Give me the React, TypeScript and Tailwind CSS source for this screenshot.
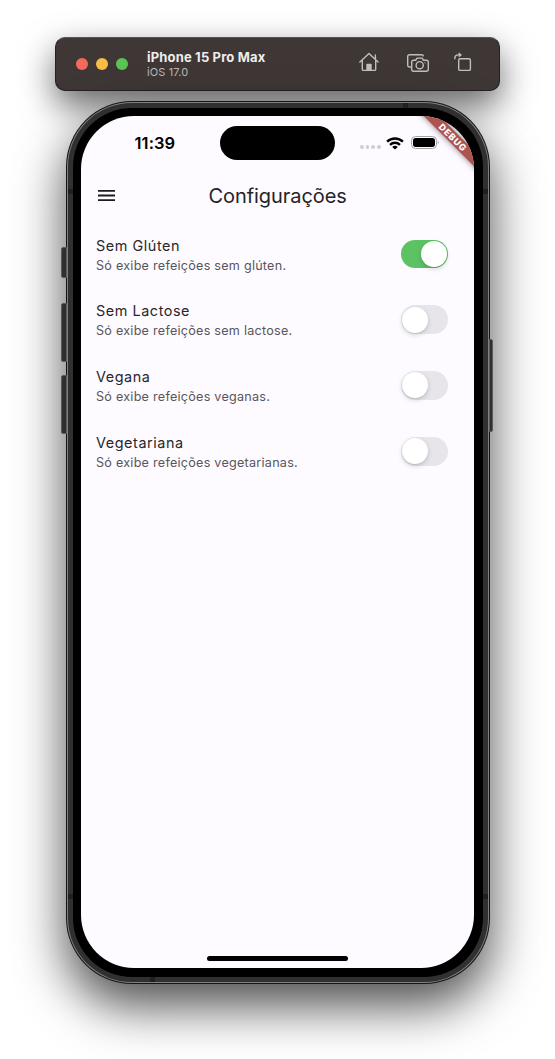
import { useState } from "react";

const settings = [
  { title: "Sem Glúten", subtitle: "Só exibe refeições sem glúten.", initial: true },
  { title: "Sem Lactose", subtitle: "Só exibe refeições sem lactose.", initial: false },
  { title: "Vegana", subtitle: "Só exibe refeições veganas.", initial: false },
  { title: "Vegetariana", subtitle: "Só exibe refeições vegetarianas.", initial: false },
];

function HomeIcon() {
  return (
    <svg width="20" height="20" viewBox="0 0 20 20" fill="none" stroke="#c2bebb" strokeWidth="1.4" strokeLinejoin="round" strokeLinecap="round">
      <path d="M.9 10 10 1.4 19.1 10M3.3 8.2v9.2c0 .6.4 1 1 1h11.4c.6 0 1-.4 1-1V8.2M16.4 7V3" />
      <path d="M8 18v-5.5h4V18z" fill="#c2bebb" />
    </svg>
  );
}

function ScreenshotIcon() {
  return (
    <svg width="22" height="18" viewBox="0 0 22 18" fill="none" stroke="#c2bebb" strokeWidth="1.4" strokeLinejoin="round">
      <path d="M4.7 13H2.5C1.4 13 .7 12.3.7 11.2V2.5C.7 1.4 1.4.7 2.5.7h12c1 0 1.8.6 1.9 1.7" />
      <path d="M6.500 6.200h2.300L10 4.100h5.200l1.200 2.100h3c1.100 0 1.900.7 1.900 1.800v7.300c0 1.100-.8 1.900-1.900 1.900H6.500c-1.100 0-1.800-.8-1.800-1.900V8c0-1.100.7-1.800 1.800-1.800Z" />
      <circle cx="12.700" cy="11.200" r="3.600" />
      <circle cx="18" cy="8.800" r=".6" fill="#c2bebb" stroke="none" />
    </svg>
  );
}

function RotateIcon() {
  return (
    <svg width="18" height="20" viewBox="0 0 18 20" fill="none" stroke="#c2bebb" strokeWidth="1.4">
      <rect x="4.700" y="6.700" width="11.700" height="11.700" rx="1.500" />
      <path d="M.8 7.200V6.200C.8 4 2.200 2.900 4.300 2.900H6" />
      <path d="M4.700.3 8 2.900 4.700 5.500z" fill="#c2bebb" stroke="none" />
    </svg>
  );
}

function Toolbar() {
  return (
    <header className="flex h-[54px] w-[445px] items-center rounded-[10px] border border-[#242120] border-t-[#59544f] bg-[#3e3735] pl-5 shadow-[0_14px_34px_rgba(0,0,0,0.6)]">
      <div className="flex gap-2">
        <span className="size-3 rounded-full bg-[#f46a5b]" />
        <span className="size-3 rounded-full bg-[#f7bd44]" />
        <span className="size-3 rounded-full bg-[#5cc454]" />
      </div>
      <div className="ml-[19px] w-[211.500px]">
        <p className="text-[13px] leading-[15px] font-bold tracking-[0.17px] text-[#efedec]">iPhone 15 Pro Max</p>
        <p className="text-[11px] leading-[14px] tracking-[0.1px] text-[#bdb9b7]">iOS 17.0</p>
      </div>
      <div className="flex items-center pb-[4px]">
        <HomeIcon />
        <span className="ml-[28px] pt-[2px]"><ScreenshotIcon /></span>
        <span className="ml-[25px]"><RotateIcon /></span>
      </div>
    </header>
  );
}

function StatusBar() {
  return (
    <div className="flex h-[54px] items-center text-black">
      <span className="w-[139px] pl-[53.500px] text-[16.500px] font-semibold tracking-[0.1px]">11:39</span>
      <span className="h-[34px] w-[115px] rounded-full bg-black" />
      <span className="ml-[25px] flex gap-[2px] pt-[8px]">
        {[0, 1, 2, 3].map((dot) => (
          <i key={dot} className="size-[3.700px] rounded-full bg-[#cfcdd1]" />
        ))}
      </span>
      <svg className="ml-[5.500px]" width="18" height="13" viewBox="0 0 18 13" fill="none" stroke="black" strokeWidth="2.400">
        <path d="M1.100 4.700C5.500.4 12.500.4 16.900 4.700M4 7.800c2.800-2.700 7.200-2.700 10 0" />
        <path d="M9 12.600 6.200 9.900c1.600-1.400 4-1.400 5.600 0z" fill="black" stroke="none" />
      </svg>
      <svg className="ml-[7px]" width="29" height="14" viewBox="0 0 29 14">
        <rect x=".5" y=".5" width="25" height="12" rx="4" fill="none" stroke="#a3a2a5" />
        <rect x="2" y="2" width="22" height="9" rx="2.700" fill="black" />
        <path d="M26.700 4.500v4c1.300-.6 1.300-3.400 0-4Z" fill="#a3a2a5" />
      </svg>
    </div>
  );
}

function Switch({ on, onToggle, label }: { on: boolean; onToggle: () => void; label: string }) {
  return (
    <button
      role="switch"
      aria-checked={on}
      aria-label={label}
      onClick={onToggle}
      className={`flex h-[28.500px] w-[46.700px] shrink-0 items-center rounded-full px-px ${on ? "justify-end bg-[#5dc264]" : "justify-start bg-[#e7e5e9]"}`}
    >
      <span className="size-[26px] rounded-full bg-white shadow-[0_2px_5px_rgba(0,0,0,0.16),0_1px_1px_rgba(0,0,0,0.06)]" />
    </button>
  );
}

function SettingRow({ title, subtitle, initial }: { title: string; subtitle: string; initial: boolean }) {
  const [on, setOn] = useState(initial);
  return (
    <li className="flex h-[65.800px] items-center justify-between pr-[26px] pl-[15px]">
      <div className="pt-[3px]">
        <p className="text-[14.400px] leading-[20px] tracking-[0.56px] text-[#29272b]">{title}</p>
        <p className="text-[12.600px] leading-[19.500px] tracking-[0.25px] text-[#58565b]">{subtitle}</p>
      </div>
      <Switch on={on} onToggle={() => setOn(!on)} label={title} />
    </li>
  );
}

function DebugBanner() {
  return (
    <div className="absolute top-0 right-0 size-[70px] overflow-hidden">
      <div className="absolute top-[15.500px] right-[-38.500px] flex h-[11px] w-[120px] rotate-45 items-center justify-center bg-[#ad5350] text-[9px] font-extrabold tracking-[0.8px] text-white shadow-[0_0_6px_rgba(0,0,0,0.5)]">
        DEBUG
      </div>
    </div>
  );
}

export default function App() {
  return (
    <main className="flex h-[1059px] w-[555px] flex-col items-center overflow-hidden bg-white pt-[37px] font-['Inter',sans-serif]">
      <Toolbar />
      <section className="relative mt-[10px] ml-px h-[883px] w-[424px] rounded-[66px] bg-[#151515] p-px shadow-[0_22px_50px_rgba(0,0,0,0.7)]">
        <i className="absolute top-[146px] -left-[5px] h-[31px] w-[6px] rounded-l-[2px] border border-[#5c5c5c] bg-[#303030]" />
        <i className="absolute top-[202px] -left-[5px] h-[59px] w-[6px] rounded-l-[2px] border border-[#5c5c5c] bg-[#303030]" />
        <i className="absolute top-[274px] -left-[5px] h-[59px] w-[6px] rounded-l-[2px] border border-[#5c5c5c] bg-[#303030]" />
        <i className="absolute top-[238px] -right-[3px] h-[93px] w-[4px] rounded-r-[2px] border border-[#5c5c5c] bg-[#303030]" />
        <div className="h-full rounded-[65px] bg-[#808080] p-px">
          <div className="relative h-full rounded-[64px] bg-[#303030] p-[5px]">
            <i className="absolute top-0 left-[335px] size-[5px] bg-[#202020]" />
            <i className="absolute bottom-0 left-[82px] size-[5px] bg-[#202020]" />
            <i className="absolute top-[86px] left-0 size-[5px] bg-[#202020]" />
            <i className="absolute top-[86px] right-0 size-[5px] bg-[#202020]" />
            <i className="absolute bottom-[83px] left-0 size-[5px] bg-[#202020]" />
            <i className="absolute right-0 bottom-[83px] size-[5px] bg-[#202020]" />
            <div className="h-full rounded-[59px] bg-black px-[8px] pt-[8px] pb-[9px]">
              <div className="relative flex h-[852px] w-[393px] flex-col overflow-hidden rounded-[53px] bg-[#fdfbff]">
                <StatusBar />
                <div className="flex h-[51px] items-center pl-[17px]">
                  <button aria-label="Menu" className="w-[17px]">
                    <svg width="17" height="12" viewBox="0 0 17 12" fill="#1d1b1f">
                      <path d="M0 0h17v1.800H0zM0 4.600h17v1.800H0zM0 9.200h17v1.800H0z" />
                    </svg>
                  </button>
                  <h1 className="ml-[93.500px] text-[20px] leading-[26px] tracking-[-0.06px] text-[#252327]">Configurações</h1>
                </div>
                <ul className="flex-1">
                  {settings.map((setting) => (
                    <SettingRow key={setting.title} {...setting} />
                  ))}
                </ul>
                <div className="mb-[7px] ml-[126px] h-[5px] w-[141px] rounded-full bg-black" />
                <DebugBanner />
              </div>
            </div>
          </div>
        </div>
      </section>
    </main>
  );
}
